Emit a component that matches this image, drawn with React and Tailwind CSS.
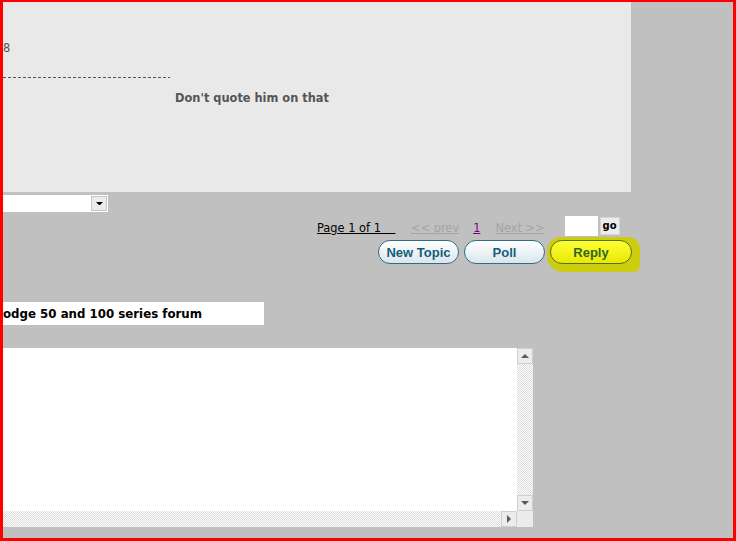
import React from 'react';

const checker =
  'bg-[repeating-conic-gradient(#dcdcdc_0_25%,#ffffff_0_50%)] bg-[length:2px_2px]';

function Tri({ dir = 'down', color = '#000', size = 4 }) {
  const pts = {
    down: `0,0 ${size * 2},0 ${size},${size}`,
    up: `0,${size} ${size * 2},${size} ${size},0`,
    right: `0,0 ${size},${size} 0,${size * 2}`,
  };
  const w = dir === 'right' ? size : size * 2;
  const h = dir === 'right' ? size * 2 : size;
  return (
    <svg width={w} height={h} viewBox={`0 0 ${w} ${h}`}>
      <polygon points={pts[dir]} fill={color} />
    </svg>
  );
}

function ScrollBtn({ dir }) {
  return (
    <div className="w-[16px] h-[16px] bg-[#ececec] border border-[#d0d0d0] flex items-center justify-center shrink-0">
      <Tri dir={dir} color="#5a5a5a" size={4} />
    </div>
  );
}

function ForumButton({ children }) {
  return (
    <button className="w-[81px] h-[24px] rounded-[12px] border border-[#2f6c88] bg-gradient-to-b from-white to-[#dbe6ec] text-[#145e7c] font-['Liberation_Sans',Arial,sans-serif] font-bold text-[13px] leading-none">
      {children}
    </button>
  );
}

export default function App() {
  return (
    <div className="w-[736px] h-[541px] overflow-hidden bg-[#c0c0c0] border-solid border-[#ff0000] border-l-[3px] border-r-[3px] border-t-2 border-b-[3px] font-['DejaVu_Sans',Verdana,sans-serif] text-[11px] leading-[14px]">
      {/* post panel */}
      <div className="w-[628px] h-[190px] bg-[#e9e9e9] pt-[39px] text-[#555]">
        <div className="text-[11.4px]">8</div>
        <div className="mt-[22px] w-[167px] h-px bg-[repeating-linear-gradient(90deg,#555_0_3px,transparent_3px_5px)]" />
        <div className="mt-[13px] ml-[172px] font-bold text-[11.4px]">Don't quote him on that</div>
      </div>

      {/* jump select */}
      <div className="mt-[3px] w-[105px] h-[17px] bg-white flex items-center justify-end pr-[1px]">
        <div className="w-[16px] h-[15px] bg-[#ebebeb] border border-[#c6c6c6] flex items-center justify-center">
          <Tri dir="down" color="#000" size={3.5} />
        </div>
      </div>

      {/* pagination */}
      <div className="mt-[4px] h-[20px] flex items-center">
        <a className="ml-[314px] mt-[3px] w-[81px] underline text-black whitespace-pre text-[11.4px]">Page 1 of 1{'\u00a0\u00a0\u00a0\u00a0'}</a>
        <a className="ml-[13px] mt-[3px] underline text-[#a3a3a3] text-[11.4px]">&lt;&lt; prev</a>
        <a className="ml-[14px] mt-[3px] underline text-[#800080] text-[11.4px]">1</a>
        <a className="ml-[15px] mt-[3px] underline text-[#a3a3a3] text-[11.4px]">Next &gt;&gt;</a>
        <div className="ml-[20px] w-[33px] h-[20px] bg-white" />
        <button className="ml-[2px] w-[20px] h-[18px] bg-[#ececec] border border-[#d4d4d4] font-bold text-black text-[10px] leading-none">
          go
        </button>
      </div>

      {/* buttons */}
      <div className="mt-[1px] flex items-start">
        <div className="ml-[375px] mt-[3px] flex gap-[5px]">
          <ForumButton>New Topic</ForumButton>
          <ForumButton>Poll</ForumButton>
        </div>
        <div className="ml-[2px] pl-[3px] pt-[3px] pr-[8px] pb-[8px] bg-[#cccc10] rounded-tl-[14px] rounded-tr-[12px] rounded-br-[6px] rounded-bl-[16px]">
          <button className="w-[82px] h-[24px] rounded-[12px] border border-[#55701c] bg-gradient-to-b from-[#ffff30] to-[#e8e800] text-[#2f6624] font-['Liberation_Sans',Arial,sans-serif] font-bold text-[13px] leading-none">
            Reply
          </button>
        </div>
      </div>

      {/* forum title */}
      <div className="mt-[30px] w-[261px] h-[23px] bg-white flex items-center">
        <span className="font-bold text-black text-[11.8px]">odge 50 and 100 series forum</span>
      </div>

      {/* message box */}
      <div className="mt-[23px] w-[530px] h-[179px] flex flex-col">
        <div className="flex flex-1">
          <div className="flex-1 bg-white" />
          <div className={`w-[16px] flex flex-col justify-between ${checker}`}>
            <ScrollBtn dir="up" />
            <ScrollBtn dir="down" />
          </div>
        </div>
        <div className="flex h-[16px]">
          <div className={`flex-1 flex justify-end ${checker}`}>
            <ScrollBtn dir="right" />
          </div>
          <div className="w-[16px] bg-[#ececec]" />
        </div>
      </div>
    </div>
  );
}
